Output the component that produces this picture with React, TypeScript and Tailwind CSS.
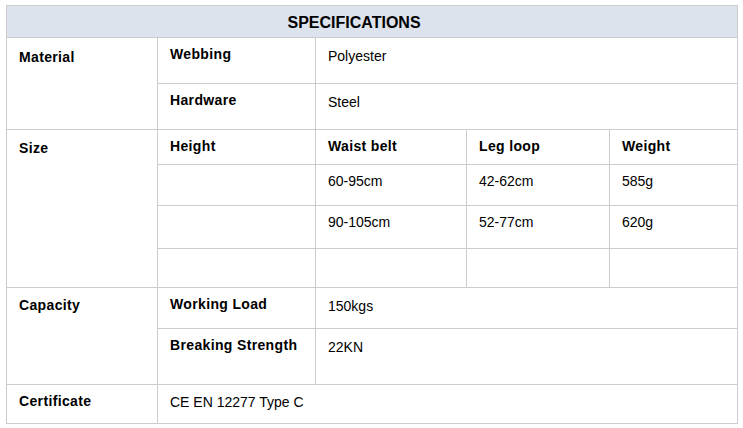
import React from "react";

// cell bases without top padding; each cell gets its own pt-*
const cell = "align-top border border-[#cccccc] pl-[12px]";
const label = cell + " font-bold tracking-[0.35px]";
const blank = "align-top border border-[#cccccc]";

const App: React.FC = () => {
  return (
    <div className="min-h-screen bg-white pl-[6px] pt-[5px] font-['Liberation_Sans',Arial,sans-serif] text-[14px] leading-[15px] text-black">
      <table className="table-fixed border-collapse w-[731px]">
        <colgroup>
          <col className="w-[151px]" />
          <col className="w-[158px]" />
          <col className="w-[151px]" />
          <col className="w-[143px]" />
          <col className="w-[128px]" />
        </colgroup>
        <tbody>
          {/* Header */}
          <tr className="h-[32px]">
            <th
              colSpan={5}
              className="border border-[#cccccc] bg-[#dce3ed] pr-[36px] pt-[2px] text-center align-middle text-[16px] font-bold"
            >
              SPECIFICATIONS
            </th>
          </tr>

          {/* Material */}
          <tr className="h-[46px]">
            <td rowSpan={2} className={label + " pt-[12px]"}>Material</td>
            <td className={label + " pt-[9px]"}>Webbing</td>
            <td colSpan={3} className={cell + " pt-[11px]"}>Polyester</td>
          </tr>
          <tr className="h-[46px]">
            <td className={label + " pt-[9px]"}>Hardware</td>
            <td colSpan={3} className={cell + " pt-[11px]"}>Steel</td>
          </tr>

          {/* Size */}
          <tr className="h-[35px]">
            <td rowSpan={4} className={label + " pt-[11px]"}>Size</td>
            <td className={label + " pt-[9px]"}>Height</td>
            <td className={label + " pt-[9px]"}>Waist belt</td>
            <td className={label + " pt-[9px]"}>Leg loop</td>
            <td className={label + " pt-[9px]"}>Weight</td>
          </tr>
          <tr className="h-[41px]">
            <td className={blank}></td>
            <td className={cell + " pt-[9px]"}>60-95cm</td>
            <td className={cell + " pt-[9px]"}>42-62cm</td>
            <td className={cell + " pt-[9px]"}>585g</td>
          </tr>
          <tr className="h-[43px]">
            <td className={blank}></td>
            <td className={cell + " pt-[9px]"}>90-105cm</td>
            <td className={cell + " pt-[9px]"}>52-77cm</td>
            <td className={cell + " pt-[9px]"}>620g</td>
          </tr>
          <tr className="h-[39px]">
            <td className={blank}></td>
            <td className={blank}></td>
            <td className={blank}></td>
            <td className={blank}></td>
          </tr>

          {/* Capacity */}
          <tr className="h-[41px]">
            <td rowSpan={2} className={label + " pt-[10px]"}>Capacity</td>
            <td className={label + " pt-[9px]"}>Working Load</td>
            <td colSpan={3} className={cell + " pt-[11px]"}>150kgs</td>
          </tr>
          <tr className="h-[56px]">
            <td className={label + " pt-[9px]"}>Breaking Strength</td>
            <td colSpan={3} className={cell + " pt-[11px]"}>22KN</td>
          </tr>

          {/* Certificate */}
          <tr className="h-[39px]">
            <td className={label + " pt-[9px]"}>Certificate</td>
            <td colSpan={4} className={cell + " pt-[10px]"}>CE EN 12277 Type C</td>
          </tr>
        </tbody>
      </table>
    </div>
  );
};

export default App;
